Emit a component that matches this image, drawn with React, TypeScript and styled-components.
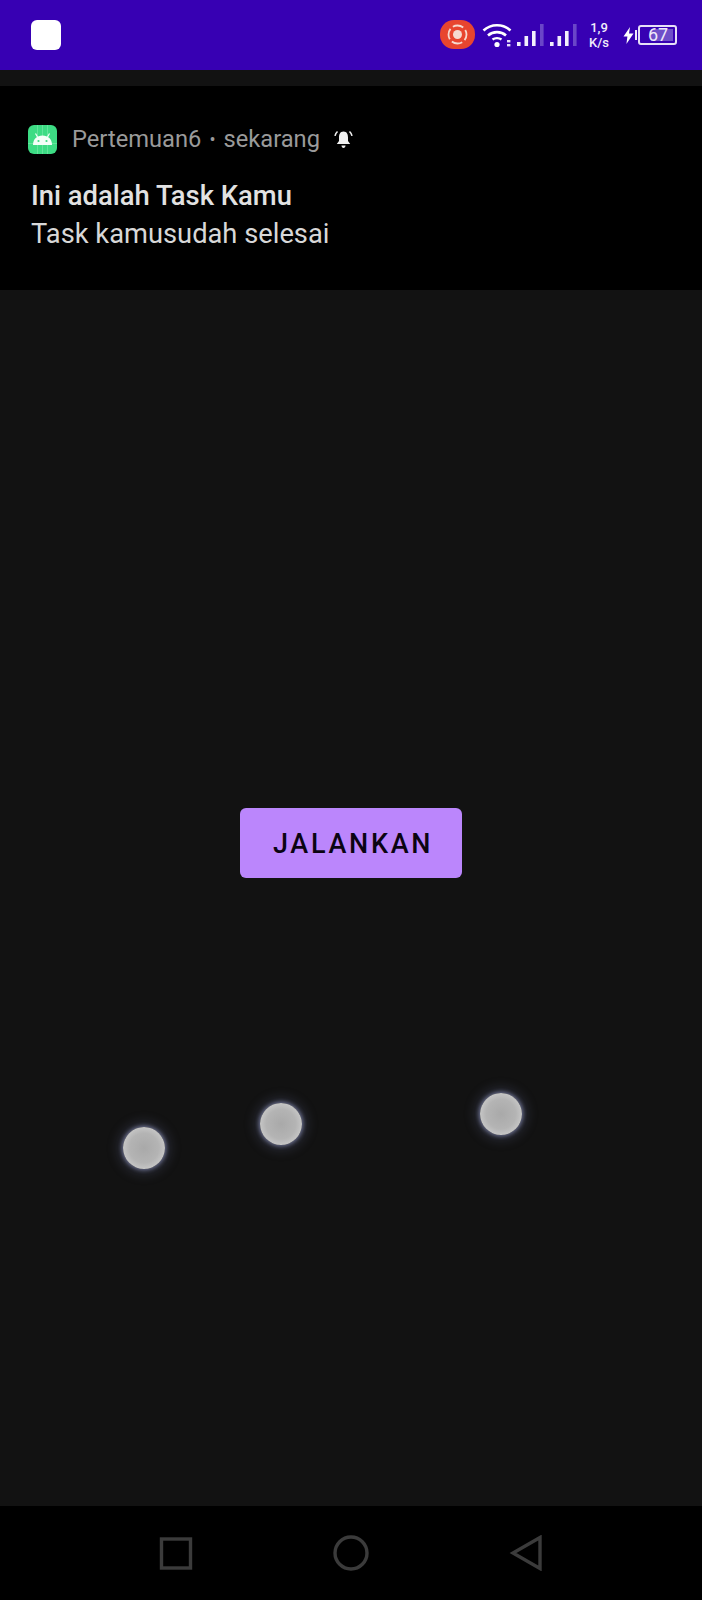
import React from "react"
import styled, { createGlobalStyle } from "styled-components"

const GlobalStyle = createGlobalStyle`
  html, body {
    margin: 0;
    padding: 0;
    background: #121212;
  }
  * {
    box-sizing: border-box;
  }
`

const Screen = styled.div`
  width: 702px;
  height: 1600px;
  display: flex;
  flex-direction: column;
  background: #121212;
  font-family: Roboto, "Liberation Sans", sans-serif;
  overflow: hidden;
`

const StatusBar = styled.div`
  height: 70px;
  flex: none;
  display: flex;
  align-items: center;
  background: #3700b3;
  padding: 0 25px 0 31px;
`

const AppBadge = styled.div`
  width: 30px;
  height: 30px;
  border-radius: 6px;
  background: #fff;
`

const StatusIcons = styled.div`
  margin-left: auto;
  display: flex;
  align-items: center;
`

const NetSpeed = styled.div`
  width: 26px;
  margin: 0 11px 0 9px;
  display: flex;
  flex-direction: column;
  align-items: center;
  color: #f1ecfb;
  font-size: 13px;
  line-height: 15px;
  font-weight: 500;
  white-space: nowrap;
`

const Battery = styled.div`
  position: relative;
  width: 39px;
  height: 20px;
  margin-left: 4px;
  border: 2px solid #e6dff7;
  border-radius: 3px;
  padding: 2px;
  display: flex;
  &::before {
    content: "";
    position: absolute;
    left: -5px;
    top: 3px;
    width: 2px;
    height: 10px;
    background: #efe9fa;
  }
`

const BatteryFill = styled.div`
  margin-left: auto;
  width: 70%;
  background: #6f4fc9;
`

const BatteryLevel = styled.span`
  position: absolute;
  left: 8px;
  top: -2px;
  color: #efe9fa;
  font-size: 18px;
  line-height: 20px;
`

const Spacer = styled.div`
  height: 16px;
  flex: none;
`

const Notification = styled.div`
  height: 204px;
  flex: none;
  background: #000;
  padding: 38px 0 0 28px;
`

const NotificationHead = styled.div`
  display: flex;
  align-items: center;
  height: 30px;
  color: #9a9a9a;
  font-size: 23.7px;
`

const AppIcon = styled.div`
  width: 29px;
  height: 29px;
  margin-right: 15px;
  border-radius: 6px;
  background: #3ddc84;
  display: flex;
  align-items: center;
  justify-content: center;
`

const Dot = styled.span`
  margin: 0 8px;
  font-size: 18px;
`

const BellIcon = styled.svg`
  margin-left: 14px;
`

const NotificationTitle = styled.div`
  margin: 23px 0 0 3px;
  color: #e2e2e2;
  font-size: 27.4px;
  line-height: 38px;
  font-weight: 500;
`

const NotificationText = styled.div`
  margin-left: 3px;
  color: #d8d8d8;
  font-size: 27.3px;
  line-height: 38px;
`

const Stage = styled.div`
  position: relative;
  flex: 1;
  display: flex;
  justify-content: center;
  align-items: flex-start;
  padding-top: 518px;
`

const RunButton = styled.button`
  width: 222px;
  height: 70px;
  padding: 2px 0 0 4px;
  border: none;
  border-radius: 6px;
  background: #bb86fc;
  color: #0b0412;
  font-family: Roboto, "Liberation Sans", sans-serif;
  font-size: 27px;
  font-weight: 500;
  letter-spacing: 2.7px;
`

const Ball = styled.div<{ $x: number; $y: number }>`
  position: absolute;
  left: ${(p) => p.$x - 21}px;
  top: ${(p) => p.$y - 21}px;
  width: 42px;
  height: 42px;
  border-radius: 50%;
  background: radial-gradient(circle, #a9a9a9 0%, #b4b4b4 50%, #d6d6d6 90%, #e8e8ec 100%);
  box-shadow: 0 0 4px 1px rgba(150, 155, 200, 0.7), 0 0 12px 5px rgba(105, 110, 150, 0.28);
  filter: blur(0.7px);
`

const NavBar = styled.div`
  height: 94px;
  flex: none;
  background: #000;
  display: flex;
  justify-content: center;
  align-items: center;
  gap: 139px;
`

const balls = [
  { x: 144, y: 1148 - 290 },
  { x: 281, y: 1124 - 290 },
  { x: 501, y: 1114 - 290 },
]

const bars = [
  { x: 0, h: 4 },
  { x: 7.5, h: 10 },
  { x: 15, h: 15 },
]

const SignalIcon = ({ gap }: { gap: number }) => (
  <svg width="27" height="24" viewBox="0 0 27 24" style={{ marginLeft: gap }}>
    {bars.map((b) => (
      <rect key={b.x} x={b.x} y={23 - b.h} width="3.6" height={b.h} fill="#f3effc" />
    ))}
    <rect x="23" y="1" width="3.6" height="22" fill="#6a46c8" />
  </svg>
)

const App = () => {
  return (
    <Screen>
      <GlobalStyle />
      <StatusBar>
        <AppBadge />
        <StatusIcons>
          <svg width="36" height="30" viewBox="0 0 36 30">
            <rect width="35" height="29" rx="14" fill="#e8452f" />
            <circle cx="17.5" cy="14.5" r="4.5" fill="#f6d9d0" />
            <circle cx="17.5" cy="14.5" r="9" fill="none" stroke="#f6d9d0" strokeWidth="1.8" strokeDasharray="11 3.1" strokeDashoffset="5" />
          </svg>
          <svg width="35" height="26" viewBox="0 0 35 26" style={{ marginLeft: 6 }}>
            <path d="M1.5 8.5 C9 1.5 21 1.5 28.5 8.5" fill="none" stroke="#fff" strokeWidth="2.6" />
            <path d="M6 13.5 C11 9 19 9 24 13.5" fill="none" stroke="#fff" strokeWidth="2.6" />
            <path d="M10.5 17.5 C13 15.6 17 15.6 19.5 17.5" fill="none" stroke="#fff" strokeWidth="2.4" />
            <circle cx="15" cy="22.5" r="2.6" fill="#fff" />
            <rect x="25" y="18" width="3.4" height="2.4" fill="#e6def8" />
            <rect x="25" y="22" width="3.4" height="2.4" fill="#e6def8" />
          </svg>
          <SignalIcon gap={0} />
          <SignalIcon gap={6} />
          <NetSpeed>
            <span>1,9</span>
            <span>K/s</span>
          </NetSpeed>
          <svg width="11" height="17" viewBox="0 0 11 17">
            <path d="M7 0 L0.5 9.5 H4.4 L3.4 17 L10.5 6.5 H6 Z" fill="#fff" />
          </svg>
          <Battery>
            <BatteryFill />
            <BatteryLevel>67</BatteryLevel>
          </Battery>
        </StatusIcons>
      </StatusBar>
      <Spacer />
      <Notification>
        <NotificationHead>
          <AppIcon>
            <svg width="29" height="29" viewBox="0 0 29 29">
              <path d="M9.5 0 V29 M14.5 0 V29 M19.5 0 V29 M0 18.5 H29" stroke="#7fe8ae" strokeWidth="0.6" />
              <path d="M5 20 C5 14 9 10.5 14.5 10.5 C20 10.5 24 14 24 20 Z" fill="#f4fff8" />
              <path d="M9.5 12 L7.5 8.5 M19.5 12 L21.5 8.5" stroke="#f4fff8" strokeWidth="1.2" />
              <circle cx="10.5" cy="16" r="1.1" fill="#3ddc84" />
              <circle cx="18.5" cy="16" r="1.1" fill="#3ddc84" />
            </svg>
          </AppIcon>
          Pertemuan6
          <Dot>•</Dot>
          sekarang
          <BellIcon width="19" height="19" viewBox="0 0 19 19">
            <path d="M9.5 1.5 C6 1.5 5 4.5 5 7.5 V11 L2.8 14 H16.2 L14 11 V7.5 C14 4.5 13 1.5 9.5 1.5 Z" fill="#f0f0f0" />
            <path d="M7.5 15.5 H11.5 C11.5 17 10.6 18 9.5 18 C8.4 18 7.5 17 7.5 15.5 Z" fill="#f0f0f0" />
            <path d="M3.5 1.5 C2.2 2.6 1.4 4 1 5.8 M15.5 1.5 C16.8 2.6 17.6 4 18 5.8" fill="none" stroke="#f0f0f0" strokeWidth="1.6" />
          </BellIcon>
        </NotificationHead>
        <NotificationTitle>Ini adalah Task Kamu</NotificationTitle>
        <NotificationText>Task kamusudah selesai</NotificationText>
      </Notification>
      <Stage>
        <RunButton>JALANKAN</RunButton>
        {balls.map((b) => (
          <Ball key={b.x} $x={b.x} $y={b.y} />
        ))}
      </Stage>
      <NavBar>
        <svg width="36" height="36" viewBox="0 0 36 36">
          <rect x="3.5" y="4" width="29" height="29" fill="none" stroke="#3b3b3b" strokeWidth="3.4" />
        </svg>
        <svg width="36" height="36" viewBox="0 0 36 36">
          <circle cx="18" cy="18" r="16" fill="none" stroke="#3b3b3b" strokeWidth="3.4" />
        </svg>
        <svg width="36" height="36" viewBox="0 0 36 36">
          <path d="M32 2.5 V33.5 L5 18 Z" fill="none" stroke="#3b3b3b" strokeWidth="3.4" />
        </svg>
      </NavBar>
    </Screen>
  )
}

export default App
